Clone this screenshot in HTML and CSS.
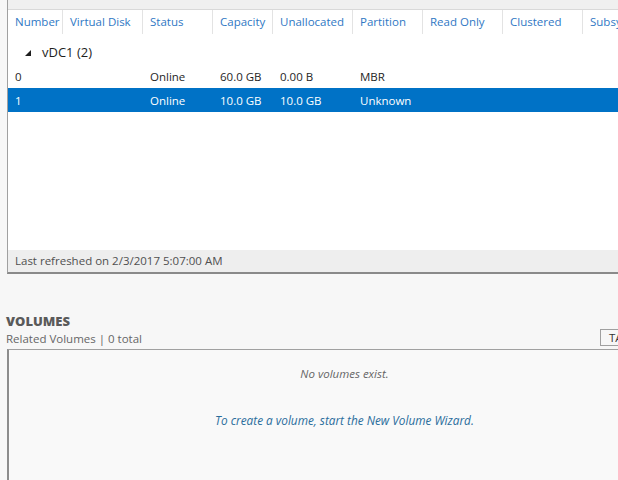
FILE: index.html
```html
<!DOCTYPE html>
<html>
<head>
<meta charset="utf-8">
<link rel="stylesheet" href="styles.css">
</head>
<body>
<div class="page">
  <section class="disks">
    <div class="strip"></div>
    <div class="grid head">
      <div class="hc">Number</div>
      <div class="hc">Virtual Disk</div>
      <div class="hc">Status</div>
      <div class="hc">Capacity</div>
      <div class="hc">Unallocated</div>
      <div class="hc">Partition</div>
      <div class="hc">Read Only</div>
      <div class="hc">Clustered</div>
      <div class="hc">Subsystem</div>
    </div>
    <div class="group">
      <svg class="tri" width="6" height="6" viewBox="0 0 6 6"><polygon points="6,0 6,6 0,6" fill="#1e1e1e"/></svg>
      <span>vDC1 (2)</span>
    </div>
    <div class="grid row">
      <div class="c">0</div><div class="c"></div><div class="c">Online</div><div class="c">60.0 GB</div><div class="c">0.00 B</div><div class="c">MBR</div><div class="c"></div><div class="c"></div><div class="c"></div>
    </div>
    <div class="grid row sel">
      <div class="c">1</div><div class="c"></div><div class="c">Online</div><div class="c">10.0 GB</div><div class="c">10.0 GB</div><div class="c">Unknown</div><div class="c"></div><div class="c"></div><div class="c"></div>
    </div>
    <div class="fill"></div>
    <div class="footer">Last refreshed on 2/3/2017 5:07:00 AM</div>
  </section>
  <section class="volumes">
    <h2 class="title">VOLUMES</h2>
    <div class="subbar">
      <span class="sub">Related Volumes | 0 total</span>
      <button class="tasks">TASKS &#9662;</button>
    </div>
    <div class="vpanel">
      <p class="empty">No volumes exist.</p>
      <p class="hint">To create a volume, start the New Volume Wizard.</p>
    </div>
  </section>
</div>
</body>
</html>
```

FILE: styles.css
```css
html, body {
  margin: 0;
  padding: 0;
  overflow: hidden;
  background: #f7f7f7;
}
body {
  font-family: "Segoe UI", "Open Sans", "Noto Sans", sans-serif;
  font-size: 11.5px;
  color: #1e1e1e;
  width: 618px;
  height: 480px;
}
.page {
  width: 680px;
  display: flex;
  flex-direction: column;
}
.disks {
  margin-left: 7px;
  border-left: 1px solid #a0a0a0;
  border-bottom: 2px solid #8a8a8a;
  background: #ffffff;
  height: 272px;
  display: flex;
  flex-direction: column;
}
.strip {
  height: 9px;
  background: #f0f0f0;
  border-bottom: 1px solid #d9d9d9;
  flex: none;
}
.grid {
  display: grid;
  grid-template-columns: 55px 80px 70px 60px 80px 70px 80px 80px 90px;
  flex: none;
}
.head {
  height: 24px;
}
.hc {
  color: #2f78c4;
  padding: 4px 0 0 7px;
  line-height: 16px;
  border-right: 1px solid #e3e3e3;
  white-space: nowrap;
  overflow: hidden;
}
.group {
  margin-top: 6px;
  height: 24px;
  display: flex;
  align-items: center;
  gap: 11px;
  padding-left: 17px;
  font-size: 13px;
  flex: none;
}
.tri {
  display: block;
  margin-top: 2px;
}
.row {
  height: 24px;
  align-items: center;
}
.c {
  padding-left: 7px;
  white-space: nowrap;
}
.sel {
  background: #0072c6;
  color: #ffffff;
}
.fill {
  flex: 1;
}
.footer {
  height: 22px;
  line-height: 22px;
  background: #eeeeee;
  color: #505050;
  padding-left: 7px;
  flex: none;
}
.volumes {
  margin-top: 39px;
  display: flex;
  flex-direction: column;
}
.title {
  margin: 0 0 0 6px;
  font-size: 13px;
  font-weight: 800;
  color: #5a5a5a;
  line-height: 16px;
}
.subbar {
  display: flex;
  justify-content: space-between;
  align-items: flex-end;
  height: 20px;
  padding-left: 6px;
}
.sub {
  color: #666666;
  line-height: 16px;
  padding-bottom: 2px;
}
.tasks {
  margin: 0 0 3px 0;
  width: 80px;
  height: 17px;
  border: 1px solid #a0a0a0;
  background: #f7f7f7;
  font: inherit;
  font-size: 11.5px;
  color: #333333;
  text-align: left;
  padding: 0 0 0 8px;
  line-height: 15px;
}
.vpanel {
  margin-left: 7px;
  border-top: 1px solid #a0a0a0;
  border-left: 2px solid #8c8c8c;
  background: #f9f9f9;
  height: 140px;
  text-align: center;
  font-style: italic;
}
.empty {
  margin: 16px 0 0 0;
  color: #666666;
  line-height: 16px;
}
.hint {
  margin: 30px 0 0 0;
  color: #2a6d9c;
  font-size: 11.8px;
  line-height: 16px;
}
```
